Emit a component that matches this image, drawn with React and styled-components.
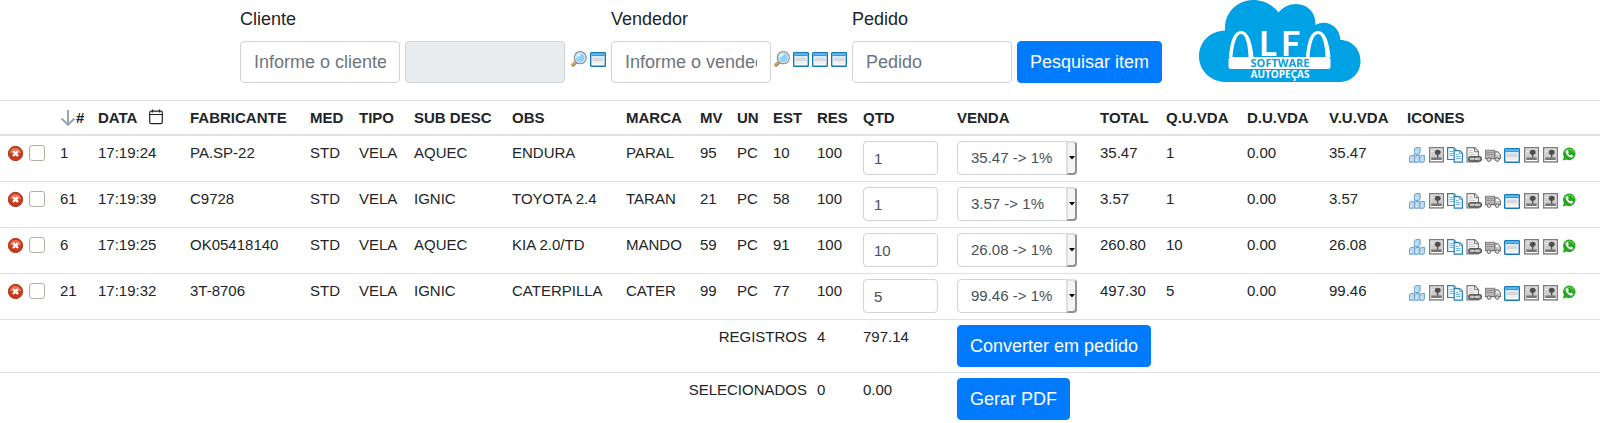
import React, { useState } from "react";
import styled, { createGlobalStyle } from "styled-components";

const GlobalStyle = createGlobalStyle`
  *, *::before, *::after { box-sizing: border-box; }
  body {
    margin: 0;
    background: #fff;
    color: #212529;
    font-family: "Liberation Sans", Arial, sans-serif;
    font-size: 18px;
    line-height: 27px;
  }
`;

/* ---------- search form ---------- */

const SearchBar = styled.form`
  display: flex;
  align-items: flex-start;
  gap: 5px;
  height: 100px;
  padding-left: 15%;
`;

const Field = styled.div`
  display: flex;
  flex-direction: column;
  gap: 8px;
  padding-top: 6px;
`;

const FieldRow = styled.div`
  display: flex;
  gap: ${(p) => (p.$tight ? 3 : 5)}px;
`;

const TextBox = styled.input`
  width: 160px;
  height: 42px;
  padding: 5px 13px;
  border: 1px solid #ced4da;
  border-radius: 4px;
  background: #fff;
  color: #495057;
  font: inherit;
  &::placeholder { color: #6c757d; opacity: 1; }
  &:disabled { background: #e9ecef; }
`;

const FieldIcons = styled.div`
  display: flex;
  gap: 3px;
  padding: 10px 0 0 ${(p) => p.$lead}px;
`;

const Button = styled.button`
  height: 42px;
  padding: 0 12px;
  border: 1px solid #007bff;
  border-radius: 4px;
  background: #007bff;
  color: #fff;
  font-family: inherit;
  font-size: 18px;
  white-space: nowrap;
  cursor: pointer;
`;

const SearchButton = styled(Button)`
  width: 145px;
  padding: 0;
  margin-top: 41px;
`;

const LogoBox = styled.div`
  margin-left: 32px;
  line-height: 0;
`;

const IconButton = styled.button`
  display: block;
  width: 16px;
  height: 16px;
  padding: 0;
  border: 0;
  background: none;
  line-height: 0;
  cursor: pointer;
`;

/* ---------- table ---------- */

const Grid = styled.table`
  width: 100%;
  table-layout: fixed;
  border-collapse: separate;
  border-spacing: 0;
  font-size: 15px;
  line-height: 24px;
`;

const Col = styled.col`
  width: ${(p) => p.$w / 16}%;
`;

const Th = styled.th`
  height: 36px;
  padding: 0 5px;
  border-top: 1px solid #dee2e6;
  border-bottom: 2px solid #dee2e6;
  text-align: left;
  white-space: nowrap;
`;

const Td = styled.td`
  height: ${(p) => (p.$tall ? 53 : 46)}px;
  padding: 5px;
  border-bottom: ${(p) => (p.$last ? 0 : 1)}px solid #dee2e6;
  text-align: ${(p) => p.$align || "left"};
  vertical-align: top;
  white-space: nowrap;
`;

const RowTools = styled.div`
  display: flex;
  gap: 5px;
  padding: 4px 0 0 3px;
`;

const Check = styled.input`
  appearance: none;
  width: 16px;
  height: 16px;
  margin: 0;
  border: 1px solid #b5aea6;
  border-radius: 3px;
  background: #fff;
  &:checked { background: #007bff; }
`;

const Quantity = styled.input`
  display: block;
  width: 75px;
  height: 34px;
  padding: 0 10px;
  border: 1px solid #ced4da;
  border-radius: 4px;
  color: #495057;
  font: inherit;
`;

const SelectBox = styled.div`
  position: relative;
  width: 120px;
  height: 34px;
`;

const PriceSelect = styled.select`
  appearance: none;
  width: 100%;
  height: 100%;
  padding: 0 12px 0 13px;
  border: 1px solid #ced4da;
  border-radius: 4px;
  background: #fff;
  color: #495057;
  font: inherit;
`;

const SelectHandle = styled.span`
  position: absolute;
  top: 0;
  right: 0;
  bottom: 0;
  display: flex;
  align-items: center;
  justify-content: center;
  width: 11px;
  border: 2px solid;
  border-color: #dedede #929292 #929292 #dedede;
  border-radius: 0 4px 4px 0;
  background: #f6f5f4;
  pointer-events: none;
`;

const RowIcons = styled.div`
  display: flex;
  gap: 3px;
  padding: 6px 0 0 2px;
`;

const HeaderIcon = styled.span`
  display: inline-block;
  margin-left: ${(p) => (p.$spaced ? 12 : 0)}px;
  line-height: 0;
  vertical-align: ${(p) => (p.$spaced ? -2 : -4)}px;
`;

/* ---------- icons ---------- */

const Svg = ({ children, ...rest }) => (
  <svg width="16" height="16" viewBox="0 0 16 16" fill="none" aria-hidden="true" {...rest}>
    {children}
  </svg>
);

const Magnifier = () => (
  <Svg>
    <path d="M2 14 5.600 10.600" stroke="#8f7550" strokeWidth="3.200" strokeLinecap="round" />
    <path d="M2 13.600 4.800 11" stroke="#f0b04c" strokeWidth="1.700" strokeLinecap="round" />
    <circle cx="9.300" cy="6.700" r="6" fill="#8fd0f6" stroke="#8d9299" strokeWidth="1.300" />
    <circle cx="9.300" cy="6.700" r="4.800" stroke="#dfe7ee" strokeWidth="1.100" />
    <path d="M6.300 6.500a3.100 3.100 0 0 1 3.200-2.900" stroke="#e4f6ff" strokeWidth="1.600" />
  </Svg>
);

const WindowIcon = () => (
  <Svg>
    <rect x="0.700" y="1.700" width="14.600" height="13.600" rx="0.600" fill="#fff" stroke="#1579b5" strokeWidth="1.400" />
    <rect x="1.400" y="2.400" width="13.200" height="2.800" fill="#2f9ae0" />
    <path d="M2 3.200h12" stroke="#79c1f2" />
    <rect x="2.400" y="6.400" width="11.200" height="4" fill="#d7d8da" />
    <rect x="2.400" y="10.300" width="11.200" height="2.500" fill="#eee" />
  </Svg>
);

const RemoveIcon = () => (
  <Svg>
    <circle cx="7.500" cy="8.500" r="7.200" fill="#c63a1d" stroke="#a32a14" strokeWidth="0.800" />
    <path d="M1.800 7.700a5.800 5.800 0 0 1 11.400 0c-3 1.400-8 1.400-11.400 0Z" fill="#e6734f" />
    <path d="m5 6 5 5m0-5-5 5" stroke="#fff" strokeWidth="2.400" />
  </Svg>
);

const CubesIcon = () => (
  <Svg stroke="#6ba1ca" strokeWidth="1" fill="#b9d7ee">
    <path d="M5.400 2 6.700.6h4.500v5L9.800 7.400H5.400Z" />
    <path d="M.5 9.800 1.800 8.400h3.800v5.200L4.400 15.300H.5Z" />
    <path d="M5.700 9.800 7 8.400h3.800v5.200L9.600 15.300H5.700Z" />
    <path d="M10.900 9.800l1.200-1.400h3.500v5.200l-1.100 1.700h-3.600Z" />
    <path d="M7 4v1.800M2 11.500v2.300m5.200-2.300v2.300m5.200-2.300v2.300" stroke="#eef7ff" />
  </Svg>
);

const ImageIcon = () => (
  <Svg>
    <rect x="1.700" y="0.700" width="13.600" height="14.200" fill="#fff" stroke="#7d7d7d" strokeWidth="1.400" />
    <rect x="3.200" y="2.200" width="10.600" height="8.600" fill="#cdcdcd" />
    <path d="M3.200 10.400h10.600v2.600H3.200Z" fill="#777" />
    <path d="M9.700 2.800c1.800 0 3 1.100 3 2.400S11.500 7.700 10.300 7.800v2.600H9V7.800C7.700 7.700 6.800 6.600 6.800 5.400S8 2.800 9.700 2.800Z" fill="#4e4e4e" />
    <path d="M3.500 4.500h2.200" stroke="#f2f2f2" />
  </Svg>
);

const CopyIcon = () => (
  <Svg stroke="#2480b9" strokeWidth="1.200">
    <path d="M.6.6h6.200l2.300 2.300v9.600H.6Z" fill="#f3faff" />
    <path d="M6.600.8v2.400h2.400M2.500 4.500h3.500M2.500 6.500h4M2.500 8.500h4" stroke="#77b6df" />
    <path d="M7.200 3.600h5.600l2.600 2.600v8.900H7.200Z" fill="#f3faff" />
    <path d="M12.600 3.800v2.700h2.600M9 7.500h2.500M9 9.500h4.500M9 11.500h4.500" stroke="#77b6df" />
  </Svg>
);

const LinkedFileIcon = () => (
  <Svg>
    <path d="M1 .7h7.800l3.700 3.700v10.500H1Z" fill="#f3f3f3" stroke="#7a7a7a" strokeWidth="1.200" />
    <path d="M8.500.9v3.800h3.800" stroke="#7a7a7a" />
    <path d="M3 3.500h3.500M3 5.500h4M3 7.500h6" stroke="#ccc" />
    <rect x="2.800" y="9.800" width="6.900" height="4.200" rx="2" fill="#bbb" stroke="#555" strokeWidth="1.500" />
    <rect x="8.400" y="9.800" width="6.900" height="4.200" rx="2" fill="#bbb" stroke="#555" strokeWidth="1.500" />
    <path d="M6.500 11.900h5" stroke="#eee" />
  </Svg>
);

const TruckIcon = () => (
  <Svg>
    <rect x="0.500" y="3.300" width="9.200" height="8.400" fill="#b5b5b5" stroke="#7f7f7f" />
    <path d="M1.500 5.500h7.200M1.500 7.500h7.200" stroke="#949494" />
    <path d="M9.800 4.700h3.300l2.400 3.200v4H9.800Z" fill="#c6c6c6" stroke="#757575" />
    <path d="M11.200 6h1.600l1.400 2.100h-3Z" fill="#f5f5f5" />
    <path d="M.5 11.600h15" stroke="#707070" />
    <circle cx="4" cy="12.600" r="1.800" fill="#ddd" stroke="#666" />
    <circle cx="12.200" cy="12.600" r="1.800" fill="#ddd" stroke="#666" />
  </Svg>
);

const WhatsIcon = () => (
  <Svg>
    <path d="M8.200.5a6.300 6.300 0 1 1-2.900 11.900L1.700 13.500l1.200-3.500A6.300 6.300 0 0 1 8.200.5Z" fill="#24a81e" />
    <path d="M3.600 5.500a5 5 0 0 1 9.200-.2" stroke="#56cc45" strokeWidth="1.400" />
    <path d="M5.800 3.300c-1.400.8-1.300 2.500-.1 4.200s2.800 3 4.500 3c1.200 0 2-.8 2-1.800L10 7.400l-1 1C8.200 8.100 7.300 7.100 7 6.300l.8-1-.9-2Z" fill="#fff" />
  </Svg>
);

const SortArrow = () => (
  <svg width="16" height="18" viewBox="0 0 16 18" fill="none" aria-hidden="true">
    <path d="M8 1v14.500M1.500 9.500 8 15.800l6.500-6.300" stroke="#8da0ac" strokeWidth="1.800" />
  </svg>
);

const CalendarIcon = () => (
  <svg width="14" height="16" viewBox="0 0 14 16" fill="none" stroke="#212529" strokeWidth="1.200" aria-hidden="true">
    <rect x="0.700" y="2.200" width="12.600" height="12.400" rx="1.600" />
    <path d="M.7 5.500h12.600M3.500.6v3M10.500.6v3" />
  </svg>
);

const Logo = () => (
  <svg width="162" height="83" viewBox="0 0 162 83" role="img" aria-label="Alfa Software Autopeças">
    <path
      d="M26 82C11 81.500 0 70 0 56.500 0 42 11 31 26 30.500 25 12 39 0 54 0c11 0 20 5 25.500 12.500C84 7 90 4 97 4c12 0 20 9 19.500 21 11-6 24 1 25 15 11 0 20 9 20 21 0 12-9 21-21 21Z"
      fill="#00a1e5"
    />
    <g fill="#fff">
      <path d="M30 57C31 41 35 31 42 31S53 41 54.500 57H49.500C49 44 46.500 34 42 34S34.500 44 33.500 57Z" />
      <path d="M107 57C108 41 112 31 119 31S130 41 131.500 57H126.500C126 44 123.500 34 119 34S111.500 44 110.500 57Z" />
    </g>
    <rect x="29.500" y="57" width="102" height="12" rx="2.500" fill="#fff" />
    <g fill="#fff" fontFamily="Lato, sans-serif" fontWeight="700" fontSize="34">
      <text x="60" y="56">L</text>
      <text x="82" y="56">F</text>
    </g>
    <text x="81" y="67" textAnchor="middle" fill="#0c9fdc" fontFamily="'Open Sans', sans-serif" fontWeight="700" fontSize="11">
      SOFTWARE
    </text>
    <text x="81" y="78" textAnchor="middle" fill="#fff" fontFamily="'Open Sans', sans-serif" fontWeight="700" fontSize="10">
      AUTOPEÇAS
    </text>
  </svg>
);

/* ---------- data ---------- */

const COLUMNS = [
  ["", 55], ["#", 38], ["DATA", 92], ["FABRICANTE", 120], ["MED", 49], ["TIPO", 55],
  ["SUB DESC", 98], ["OBS", 114], ["MARCA", 74], ["MV", 37], ["UN", 36], ["EST", 44],
  ["RES", 46], ["QTD", 94], ["VENDA", 143], ["TOTAL", 66], ["Q.U.VDA", 81],
  ["D.U.VDA", 82], ["V.U.VDA", 78], ["ICONES", 198],
];

const ITEMS = [
  { id: 1, cells: ["1", "17:19:24", "PA.SP-22", "STD", "VELA", "AQUEC", "ENDURA", "PARAL", "95", "PC", "10", "100"], qty: 1, price: "35.47", total: "35.47", last: "1" },
  { id: 61, cells: ["61", "17:19:39", "C9728", "STD", "VELA", "IGNIC", "TOYOTA 2.4", "TARAN", "21", "PC", "58", "100"], qty: 1, price: "3.57", total: "3.57", last: "1" },
  { id: 6, cells: ["6", "17:19:25", "OK05418140", "STD", "VELA", "AQUEC", "KIA 2.0/TD", "MANDO", "59", "PC", "91", "100"], qty: 10, price: "26.08", total: "260.80", last: "10" },
  { id: 21, cells: ["21", "17:19:32", "3T-8706", "STD", "VELA", "IGNIC", "CATERPILLA", "CATER", "99", "PC", "77", "100"], qty: 5, price: "99.46", total: "497.30", last: "5" },
];

const ACTIONS = [
  ["Estoque", CubesIcon], ["Imagem", ImageIcon], ["Copiar", CopyIcon],
  ["Anexo", LinkedFileIcon], ["Entrega", TruckIcon], ["Abrir", WindowIcon],
  ["Foto", ImageIcon], ["Galeria", ImageIcon], ["WhatsApp", WhatsIcon],
];

const Action = ({ label, icon: Icon }) => (
  <IconButton type="button" aria-label={label}>
    <Icon />
  </IconButton>
);

function ItemRow({ item }) {
  const [qty, setQty] = useState(item.qty);
  return (
    <tr>
      <Td>
        <RowTools>
          <Action label={`Remover item ${item.id}`} icon={RemoveIcon} />
          <Check type="checkbox" aria-label={`Selecionar item ${item.id}`} />
        </RowTools>
      </Td>
      {item.cells.map((text, i) => <Td key={i}>{text}</Td>)}
      <Td>
        <Quantity aria-label="Quantidade" value={qty} onChange={(e) => setQty(e.target.value)} />
      </Td>
      <Td>
        <SelectBox>
          <PriceSelect aria-label="Venda">
            <option>{`${item.price} -> 1%`}</option>
          </PriceSelect>
          <SelectHandle>
            <svg width="6" height="4" viewBox="0 0 6 4" aria-hidden="true">
              <path d="M0 0h6L3 3.500Z" fill="#000" />
            </svg>
          </SelectHandle>
        </SelectBox>
      </Td>
      <Td>{item.total}</Td>
      <Td>{item.last}</Td>
      <Td>0.00</Td>
      <Td>{item.price}</Td>
      <Td>
        <RowIcons>
          {ACTIONS.map(([label, icon]) => <Action key={label} label={label} icon={icon} />)}
        </RowIcons>
      </Td>
    </tr>
  );
}

const SummaryRow = ({ label, count, total, action, last }) => (
  <tr>
    <Td $tall $last={last} $align="right" colSpan={12}>{label}</Td>
    <Td $tall $last={last}>{count}</Td>
    <Td $tall $last={last}>{total}</Td>
    <Td $tall $last={last} colSpan={6}>
      <Button type="button">{action}</Button>
    </Td>
  </tr>
);

export default function App() {
  return (
    <>
      <GlobalStyle />
      <SearchBar onSubmit={(e) => e.preventDefault()}>
        <Field>
          <label htmlFor="cliente">Cliente</label>
          <FieldRow>
            <TextBox id="cliente" placeholder="Informe o cliente" />
            <TextBox aria-label="Nome do cliente" disabled />
            <FieldIcons $lead={1}>
              <Action label="Buscar cliente" icon={Magnifier} />
              <Action label="Abrir cliente" icon={WindowIcon} />
            </FieldIcons>
          </FieldRow>
        </Field>
        <Field>
          <label htmlFor="vendedor">Vendedor</label>
          <FieldRow $tight>
            <TextBox id="vendedor" placeholder="Informe o vendedor" />
            <FieldIcons $lead={0}>
              <Action label="Buscar vendedor" icon={Magnifier} />
              <Action label="Abrir vendedor" icon={WindowIcon} />
              <Action label="Abrir pedidos" icon={WindowIcon} />
              <Action label="Abrir itens" icon={WindowIcon} />
            </FieldIcons>
          </FieldRow>
        </Field>
        <Field>
          <label htmlFor="pedido">Pedido</label>
          <TextBox id="pedido" placeholder="Pedido" />
        </Field>
        <SearchButton type="submit">Pesquisar item</SearchButton>
        <LogoBox><Logo /></LogoBox>
      </SearchBar>

      <Grid>
        <colgroup>
          {COLUMNS.map(([name, w]) => <Col key={name} $w={w} />)}
        </colgroup>
        <thead>
          <tr>
            {COLUMNS.map(([name]) => (
              <Th key={name} scope="col">
                {name === "#" && <HeaderIcon><SortArrow /></HeaderIcon>}
                {name}
                {name === "DATA" && <HeaderIcon $spaced><CalendarIcon /></HeaderIcon>}
              </Th>
            ))}
          </tr>
        </thead>
        <tbody>
          {ITEMS.map((item) => <ItemRow key={item.id} item={item} />)}
          <SummaryRow label="REGISTROS" count="4" total="797.14" action="Converter em pedido" />
          <SummaryRow label="SELECIONADOS" count="0" total="0.00" action="Gerar PDF" last />
        </tbody>
      </Grid>
    </>
  );
}
